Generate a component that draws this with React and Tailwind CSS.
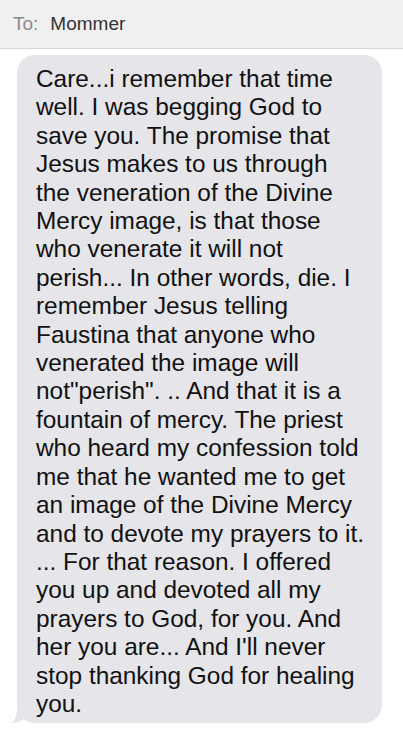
import React from "react";

const lines = [
  "Care...i remember that time",
  "well. I was begging God to",
  "save you. The promise that",
  "Jesus makes to us through",
  "the veneration of the Divine",
  "Mercy image, is that those",
  "who venerate it will not",
  "perish... In other words, die. I",
  "remember Jesus telling",
  "Faustina that anyone who",
  "venerated the image will",
  "not\"perish\". .. And that it is a",
  "fountain of mercy. The priest",
  "who heard my confession told",
  "me that he wanted me to get",
  "an image of the Divine Mercy",
  "and to devote my prayers to it.",
  "... For that reason. I offered",
  "you up and devoted all my",
  "prayers to God, for you. And",
  "her you are... And I'll never",
  "stop thanking God for healing",
  "you.",
];

export default function App() {
  return (
    <div className="w-[403px] h-[730px] bg-white overflow-hidden" style={{ fontFamily: '"Liberation Sans", Arial, sans-serif' }}>
      <div className="h-[49px] bg-[#f0f0f0] border-b border-[#d6d6d6] flex items-center pl-[13px] text-[19px]">
        <span className="text-[#8a8a8a]">To:</span>
        <span className="ml-[12px] text-[#333333]">Mommer</span>
      </div>
      <div className="relative ml-[17px] mt-[6px] w-[365px] h-[668px] bg-[#e5e5ea] rounded-[18px] pl-[19px] pt-[10px] text-[24.4px] leading-[28.4px] text-[#111111]">
        {lines.map((l, i) => (
          <div key={i} className="whitespace-nowrap">{l}</div>
        ))}
        <svg className="absolute left-[-6px] bottom-0" width="20" height="14" viewBox="0 0 20 14">
          <path d="M6 0 C6 6 4 11 0 14 C6 14 10 12 13 10 L20 10 L20 0 Z" fill="#e5e5ea" />
        </svg>
      </div>
    </div>
  );
}
